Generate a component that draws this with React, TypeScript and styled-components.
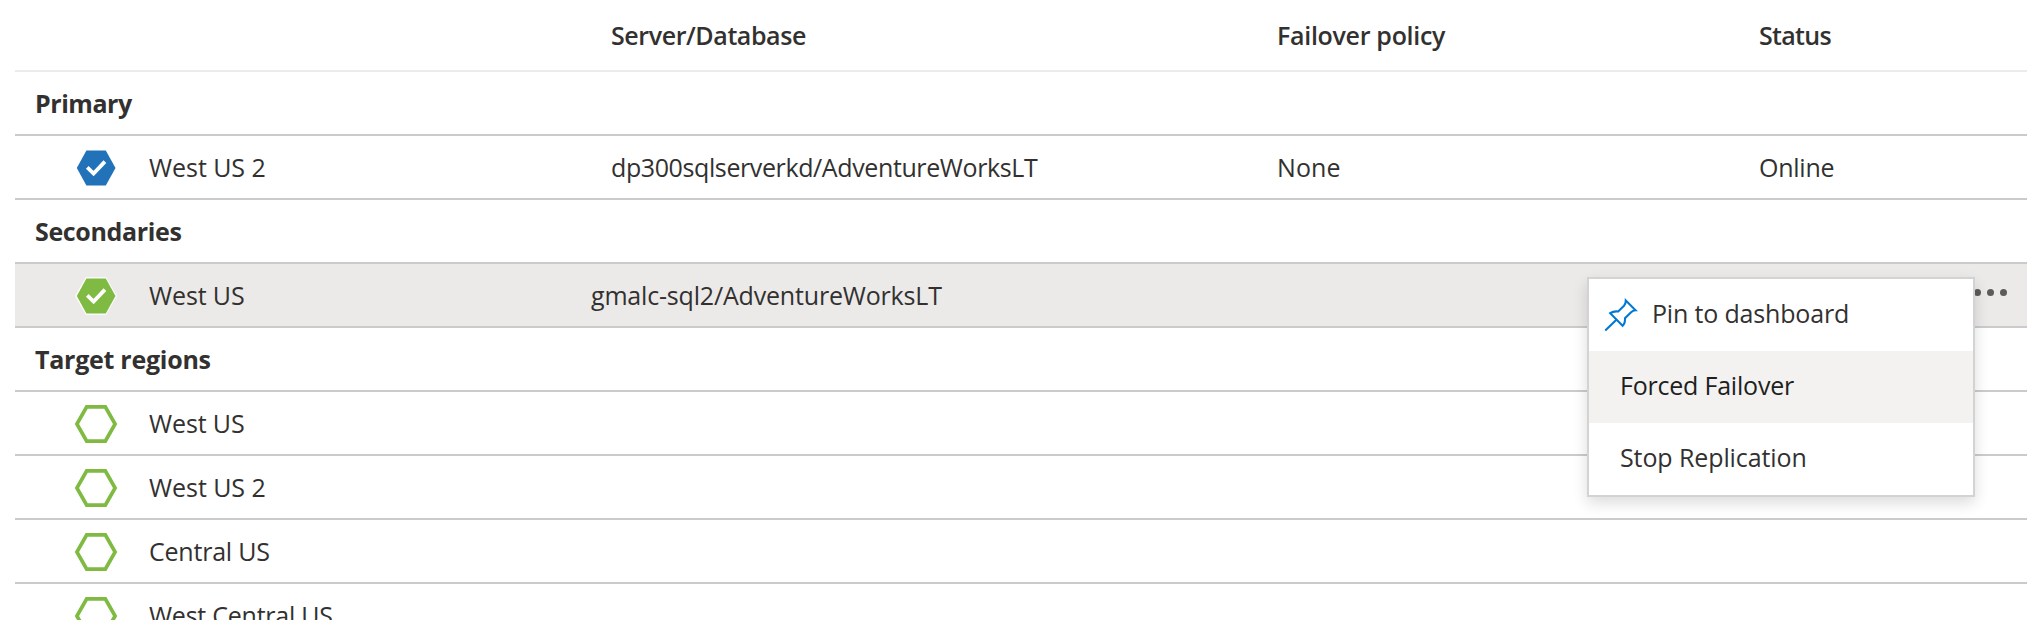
import React from 'react';
import styled, { createGlobalStyle } from 'styled-components';

const GlobalStyle = createGlobalStyle`
  * { box-sizing: border-box; }
  html, body { margin: 0; height: 100%; overflow: hidden; background: #fff; }
  #root { height: 100%; }
`;

const Page = styled.main`
  position: relative;
  height: 620px;
  padding: 0 11px 0 15px;
  overflow: hidden;
  background: #fff;
  color: #323130;
  font-family: 'Open Sans', 'Noto Sans', sans-serif;
  font-size: 25px;
  line-height: 34px;
  white-space: nowrap;
`;

const Row = styled.div<{ $selected?: boolean }>`
  display: grid;
  grid-template-columns: 134px 462px 666px 482px 1fr auto;
  align-items: center;
  height: 64px;
  border-bottom: 2px solid #cbcbcb;
  background: ${p => (p.$selected ? '#ebeae8' : 'transparent')};
`;

const HeaderRow = styled(Row)`
  height: 72px;
  border-bottom-color: #ebebeb;
  font-weight: 600;
`;

const GroupRow = styled.div`
  display: flex;
  align-items: center;
  height: 64px;
  padding-left: 20px;
  border-bottom: 2px solid #cbcbcb;
  font-weight: 700;
`;

const IconCell = styled.div`
  display: flex;
  padding: 2px 0 0 59px;
`;

const Label = styled.span<{ $track?: number }>`
  letter-spacing: ${p => p.$track ?? 0}px;
`;

const ServerLabel = styled(Label)<{ $outdent?: boolean }>`
  margin-left: ${p => (p.$outdent ? '-20px' : '0')};
`;

const MoreButton = styled.button`
  display: flex;
  gap: 6px;
  padding: 0 20px 6px 0;
  border: 0;
  background: none;
`;

const Dot = styled.i`
  width: 7px;
  height: 7px;
  border-radius: 50%;
  background: #5c5b5a;
`;

const Menu = styled.div`
  position: absolute;
  top: 277px;
  left: 1587px;
  width: 388px;
  border: 2px solid #d3d3d3;
  background: #fff;
  box-shadow: 0 6px 14px rgba(0, 0, 0, 0.14);
`;

const MenuItem = styled.div<{ $active?: boolean; $icon?: boolean }>`
  display: flex;
  align-items: center;
  gap: 14px;
  height: 72px;
  padding: 0 0 4px ${p => (p.$icon ? 15 : 31)}px;
  background: ${p => (p.$active ? '#f3f2f1' : '#fff')};
  color: ${p => (p.$active ? '#201f1e' : '#323130')};
`;

const PinSvg = styled.svg`
  flex: none;
  margin-top: 4px;
`;

type Kind = 'primary' | 'secondary' | 'target';

function RegionIcon({ kind }: { kind: Kind }) {
  if (kind === 'target') {
    return (
      <svg width="44" height="40" viewBox="0 0 44 40" fill="none">
        <path d="M12.7 2.9h18.6L41.1 20l-9.8 17.1H12.7L2.9 20z" stroke="#7fba42" strokeWidth="3.7" />
      </svg>
    );
  }
  return (
    <svg width="44" height="40" viewBox="0 0 44 40" fill="none">
      <path d="M11.8 1.2h20.4L42.8 20 32.2 38.8H11.8L1.2 20z" fill="#fff" />
      <path d="M12.4 2.4h19.4L41.5 20l-9.7 17.6H12.4L2.8 20z" fill={kind === 'primary' ? '#2272b9' : '#7fba42'} />
      <path d="M13.3 19.3l6.3 6.2L30.9 13.6" stroke="#fff" strokeWidth="3.8" />
    </svg>
  );
}

function PinIcon() {
  return (
    <PinSvg width="34" height="34" viewBox="0 0 34 34" fill="none" stroke="#0078d4" strokeWidth="2.1">
      <path d="M21.8 2.6L31.6 12.3C29.4 12.5 28.2 13.1 26.8 14.5L21 20.2C21.3 23.2 20.6 25.8 18.6 27.8L6.2 15.2C8.5 13.6 11.3 13.1 14.2 13.5L20 7.7C21.4 6.2 21.8 4.8 21.8 2.6Z" />
      <path d="M12.4 21.7L1.3 32.4" />
    </PinSvg>
  );
}

interface Region {
  name: string;
  track: number;
  kind: Kind;
}

const targets: Region[] = [
  { name: 'West US', track: -0.12, kind: 'target' },
  { name: 'West US 2', track: -0.05, kind: 'target' },
  { name: 'Central US', track: -0.22, kind: 'target' },
  { name: 'West Central US', track: -0.24, kind: 'target' },
];

export default function App() {
  return (
    <Page>
      <GlobalStyle />
      <HeaderRow>
        <span />
        <span />
        <Label $track={-0.41}>Server/Database</Label>
        <Label $track={-0.3}>Failover policy</Label>
        <Label $track={-0.7}>Status</Label>
      </HeaderRow>
      <GroupRow>
        <Label $track={-0.45}>Primary</Label>
      </GroupRow>
      <Row>
        <IconCell>
          <RegionIcon kind="primary" />
        </IconCell>
        <Label $track={-0.05}>West US 2</Label>
        <ServerLabel $track={-0.39}>dp300sqlserverkd/AdventureWorksLT</ServerLabel>
        <Label $track={0.1}>None</Label>
        <Label $track={-0.25}>Online</Label>
      </Row>
      <GroupRow>
        <Label $track={-0.35}>Secondaries</Label>
      </GroupRow>
      <Row $selected>
        <IconCell>
          <RegionIcon kind="secondary" />
        </IconCell>
        <Label $track={-0.12}>West US</Label>
        <ServerLabel $outdent $track={-0.18}>gmalc-sql2/AdventureWorksLT</ServerLabel>
        <span />
        <span />
        <MoreButton aria-label="More">
          <Dot />
          <Dot />
          <Dot />
        </MoreButton>
      </Row>
      <GroupRow>
        <Label $track={-0.26}>Target regions</Label>
      </GroupRow>
      {targets.map(r => (
        <Row key={r.name}>
          <IconCell>
            <RegionIcon kind={r.kind} />
          </IconCell>
          <Label $track={r.track}>{r.name}</Label>
        </Row>
      ))}
      <Menu>
        <MenuItem $icon>
          <PinIcon />
          <Label $track={-0.17}>Pin to dashboard</Label>
        </MenuItem>
        <MenuItem $active>
          <Label $track={-0.21}>Forced Failover</Label>
        </MenuItem>
        <MenuItem>
          <Label $track={-0.1}>Stop Replication</Label>
        </MenuItem>
      </Menu>
    </Page>
  );
}
